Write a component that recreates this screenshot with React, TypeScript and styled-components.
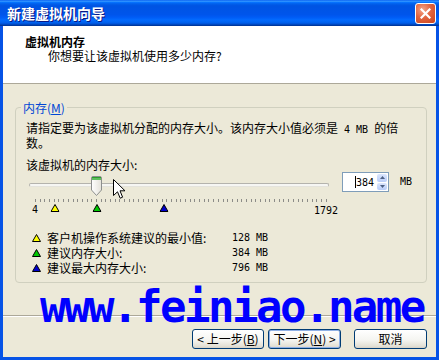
import React from 'react';
import styled, { createGlobalStyle } from 'styled-components';

const MIN_MB = 4;
const MAX_MB = 1792;
const SCALE_WIDTH = 291;
const TICK_COUNT = 63;

const toX = (mb: number) => ((mb - MIN_MB) / (MAX_MB - MIN_MB)) * SCALE_WIDTH;

const GlobalStyle = createGlobalStyle`
  html, body {
    margin: 0;
    padding: 0;
    background: #ece9d8;
  }
  body {
    font-family: "Noto Sans CJK SC", "DejaVu Sans", sans-serif;
    font-size: 12px;
    color: #000;
  }
`;

const Window = styled.div`
  position: relative;
  width: 439px;
  height: 360px;
  display: flex;
  flex-direction: column;
  overflow: hidden;
`;

const TitleBar = styled.div`
  height: 26px;
  box-sizing: border-box;
  display: flex;
  align-items: center;
  justify-content: space-between;
  padding: 0 3px 0 7px;
  background: linear-gradient(
    180deg,
    #0058ee 0%,
    #3593ff 4%,
    #288eff 6%,
    #127dff 8%,
    #036ffc 10%,
    #0262ee 14%,
    #0057e5 20%,
    #0054e3 24%,
    #0055eb 56%,
    #005bf5 66%,
    #026afe 76%,
    #0062ef 86%,
    #0052d6 92%,
    #0040ab 96%,
    #003092 100%
  );
`;

const Title = styled.span`
  color: #fff;
  font-weight: bold;
  font-size: 14px;
  line-height: 16px;
  text-shadow: 1px 1px #0a1883;
`;

const CloseButton = styled.div`
  width: 21px;
  height: 21px;
  box-sizing: border-box;
  border: 1px solid #fff;
  border-radius: 3px;
  background: radial-gradient(circle at 35% 30%, #f4a58a 0%, #e2643f 45%, #c8431c 100%);
  display: flex;
  align-items: center;
  justify-content: center;
`;

const Frame = styled.div`
  flex: 1;
  display: flex;
  flex-direction: column;
  border: 3px solid #0653e6;
  border-top: none;
  background: #ece9d8;
`;

const Header = styled.div`
  height: 58px;
  box-sizing: border-box;
  background: #fff;
  border-bottom: 1px solid #aca899;
  padding: 9px 0 0 22px;
`;

const Heading = styled.div`
  font-weight: bold;
  line-height: 14px;
`;

const Subtitle = styled.div`
  line-height: 14px;
  padding-left: 23px;
`;

const Body = styled.div`
  flex: 1;
  padding: 17px 9px 0 12px;
`;

const Group = styled.fieldset`
  height: 182px;
  box-sizing: border-box;
  margin: 0;
  padding: 0;
  min-width: 0;
  border: 1px solid #d0d0bf;
  border-radius: 4px;
`;

const GroupLabel = styled.legend`
  margin-left: 5px;
  padding: 0 2px;
  line-height: 13px;
  color: #0046d5;
`;

const GroupContent = styled.div`
  padding: 7px 0 0 10px;
`;

const Description = styled.div`
  line-height: 13px;
`;

const Ascii = styled.span`
  font-family: "DejaVu Sans Mono", monospace;
  font-size: 10px;
`;

const SizeLabel = styled.div`
  margin-top: 9px;
  line-height: 13px;
`;

const SliderRow = styled.div`
  margin-top: 1px;
  display: flex;
  align-items: flex-start;
`;

const SliderArea = styled.div`
  position: relative;
  width: 300px;
  height: 44px;
  margin-left: 3px;
`;

const Track = styled.div`
  margin-top: 11px;
  height: 4px;
  box-sizing: border-box;
  border: 1px solid #b4b3ad;
  border-bottom-color: #e4e3dc;
  border-radius: 2px;
  background: #f6f6f3;
`;

const Ticks = styled.div`
  margin: 12px 0 0 6px;
  width: 292px;
  height: 3px;
  display: flex;
  justify-content: space-between;
`;

const Tick = styled.span`
  width: 1px;
  height: 3px;
  background: #8c8c88;
`;

const ScaleRow = styled.div`
  position: relative;
  margin: 2px 0 0 6px;
  width: 292px;
  height: 11px;
`;

const ScaleMark = styled.span`
  position: absolute;
  top: 0;
  transform: translateX(-50%);
  line-height: 11px;
  font-family: "DejaVu Sans Mono", monospace;
  font-size: 10px;
`;

const ScaleMarker = styled.span`
  position: absolute;
  top: 0;
  transform: translateX(-50%);
  display: flex;
`;

const Thumb = styled.svg`
  position: absolute;
  top: 4px;
`;

const Pointer = styled.svg`
  position: absolute;
  left: 84px;
  top: 7px;
`;

const SpinBox = styled.div`
  margin-left: 13px;
  width: 47px;
  height: 20px;
  box-sizing: border-box;
  border: 1px solid #7f9db9;
  background: #fff;
  display: flex;
  align-items: center;
`;

const SpinValue = styled.div`
  flex: 1;
  display: flex;
  align-items: center;
  padding-left: 12px;
  font-family: "DejaVu Sans Mono", monospace;
  font-size: 10px;
`;

const Caret = styled.span`
  width: 1px;
  height: 12px;
  background: #000;
`;

const Spinner = styled.div`
  width: 10px;
  height: 16px;
  margin-right: 1px;
  display: flex;
  flex-direction: column;
  gap: 1px;
`;

const SpinButton = styled.div`
  flex: 1;
  border-radius: 2px;
  background: linear-gradient(180deg, #dbe6fd, #b9cdf9);
  display: flex;
  align-items: center;
  justify-content: center;
`;

const Unit = styled.span`
  margin-left: 11px;
  line-height: 20px;
  font-family: "DejaVu Sans Mono", monospace;
  font-size: 10px;
`;

const Legend = styled.div`
  margin-top: 14px;
  padding-left: 6px;
  display: grid;
  grid-template-columns: 15px 185px auto;
  line-height: 15px;
  align-items: center;
`;

const LegendIcon = styled.span`
  display: flex;
`;

const Footer = styled.div`
  height: 42px;
  box-sizing: border-box;
  border-top: 1px solid #aca899;
  box-shadow: inset 0 1px 0 #fff;
  display: flex;
  justify-content: flex-end;
  align-items: flex-start;
  padding: 13px 9px 0 0;
`;

const Button = styled.button<{ $width: number; $default?: boolean; $gap?: number }>`
  width: ${({ $width }) => $width}px;
  height: 20px;
  margin-left: ${({ $gap }) => $gap ?? 0}px;
  padding: 0;
  box-sizing: border-box;
  border: 1px solid #003c74;
  border-radius: 3px;
  background: linear-gradient(180deg, #ffffff 0%, #f5f5f1 55%, #e3e0d5 90%, #d6d0c5 100%);
  box-shadow: ${({ $default }) => ($default ? 'inset 0 0 0 1px #8fb0e5' : 'none')};
  font-family: "Noto Sans CJK SC", sans-serif;
  font-size: 12px;
  line-height: 16px;
  color: #000;
  display: flex;
  align-items: center;
  justify-content: center;
`;

const Watermark = styled.div`
  position: absolute;
  left: 40px;
  top: 285px;
  color: #0000ff;
  font-family: "DejaVu Sans Mono", monospace;
  font-weight: bold;
  font-size: 44px;
  line-height: 44px;
  letter-spacing: -2.5px;
  white-space: nowrap;
  pointer-events: none;
`;

const Triangle: React.FC<{ color: string }> = ({ color }) => (
  <svg width="9" height="8" viewBox="0 0 9 8">
    <polygon points="4.5,0.5 8.5,7.5 0.5,7.5" fill={color} stroke="#000" strokeWidth="1" />
  </svg>
);

const markers = [
  { mb: 128, color: '#ffff00', label: '客户机操作系统建议的最小值:' },
  { mb: 384, color: '#00c800', label: '建议内存大小:' },
  { mb: 796, color: '#0000cc', label: '建议最大内存大小:' },
];

const App: React.FC = () => {
  const value = 384;

  return (
    <>
      <GlobalStyle />
      <Window>
        <TitleBar>
          <Title>新建虚拟机向导</Title>
          <CloseButton>
            <svg width="11" height="11" viewBox="0 0 11 11">
              <path d="M1.5 1.5 L9.5 9.5 M9.5 1.5 L1.5 9.5" stroke="#fff" strokeWidth="2.2" strokeLinecap="square" />
            </svg>
          </CloseButton>
        </TitleBar>
        <Frame>
          <Header>
            <Heading>虚拟机内存</Heading>
            <Subtitle>你想要让该虚拟机使用多少内存?</Subtitle>
          </Header>
          <Body>
            <Group>
              <GroupLabel>
                内存(<u>M</u>)
              </GroupLabel>
              <GroupContent>
                <Description>
                  请指定要为该虚拟机分配的内存大小。该内存大小值必须是<Ascii> 4 MB </Ascii>的倍
                  <br />
                  数。
                </Description>
                <SizeLabel>该虚拟机的内存大小:</SizeLabel>
                <SliderRow>
                  <SliderArea>
                    <Track />
                    <Ticks>
                      {Array.from({ length: TICK_COUNT }, (_, i) => (
                        <Tick key={i} />
                      ))}
                    </Ticks>
                    <ScaleRow>
                      <ScaleMark style={{ left: 0 }}>4</ScaleMark>
                      {markers.map((m) => (
                        <ScaleMarker key={m.mb} style={{ left: toX(m.mb) }}>
                          <Triangle color={m.color} />
                        </ScaleMarker>
                      ))}
                      <ScaleMark style={{ left: SCALE_WIDTH, top: 1 }}>1792</ScaleMark>
                    </ScaleRow>
                    <Thumb
                      width="11"
                      height="20"
                      viewBox="0 0 11 20"
                      style={{ left: 6 + toX(value) - 5.5 }}
                    >
                      <defs>
                        <linearGradient id="thumbFill" x1="0" y1="0" x2="1" y2="0">
                          <stop offset="0" stopColor="#ffffff" />
                          <stop offset="1" stopColor="#e4e2da" />
                        </linearGradient>
                      </defs>
                      <path
                        d="M0.5 2 Q0.5 0.5 2 0.5 H9 Q10.5 0.5 10.5 2 V14 L5.5 19.5 L0.5 14 Z"
                        fill="url(#thumbFill)"
                        stroke="#8d8f8e"
                      />
                      <rect x="1" y="1" width="9" height="3" fill="#5fc05f" />
                      <rect x="1" y="1" width="9" height="1" fill="#2e9f2e" />
                    </Thumb>
                    <Pointer width="13" height="21" viewBox="0 0 13 21">
                      <path
                        d="M0.5 0.5 L0.5 16.5 L4.5 12.8 L7.2 19.2 L9.6 18.2 L7 11.8 L12 11.8 Z"
                        fill="#fff"
                        stroke="#000"
                        strokeWidth="1"
                        strokeLinejoin="miter"
                      />
                    </Pointer>
                  </SliderArea>
                  <SpinBox>
                    <SpinValue>
                      <Caret />
                      {value}
                    </SpinValue>
                    <Spinner>
                      <SpinButton>
                        <svg width="5" height="3" viewBox="0 0 5 3">
                          <polygon points="2.5,0 5,3 0,3" fill="#4d6185" />
                        </svg>
                      </SpinButton>
                      <SpinButton>
                        <svg width="5" height="3" viewBox="0 0 5 3">
                          <polygon points="0,0 5,0 2.5,3" fill="#4d6185" />
                        </svg>
                      </SpinButton>
                    </Spinner>
                  </SpinBox>
                  <Unit>MB</Unit>
                </SliderRow>
                <Legend>
                  {markers.map((m) => (
                    <React.Fragment key={m.mb}>
                      <LegendIcon>
                        <Triangle color={m.color} />
                      </LegendIcon>
                      <span>{m.label}</span>
                      <Ascii>{m.mb} MB</Ascii>
                    </React.Fragment>
                  ))}
                </Legend>
              </GroupContent>
            </Group>
          </Body>
          <Footer>
            <Button $width={72}>
              &lt; 上一步(<u>B</u>)
            </Button>
            <Button $width={73} $gap={4} $default>
              下一步(<u>N</u>) &gt;
            </Button>
            <Button $width={73} $gap={13}>
              取消
            </Button>
          </Footer>
        </Frame>
        <Watermark>www.feiniao.name</Watermark>
      </Window>
    </>
  );
};

export default App;
